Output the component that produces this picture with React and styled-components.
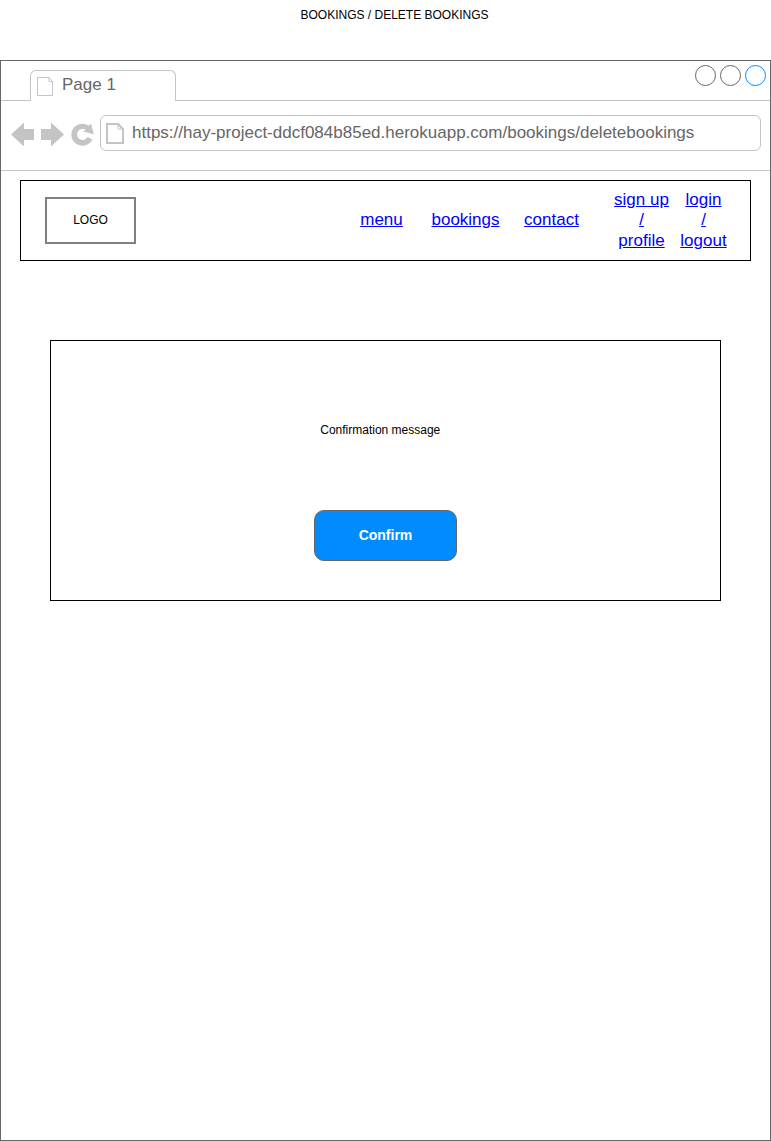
import React from "react";
import styled, { createGlobalStyle } from "styled-components";

const GlobalStyle = createGlobalStyle`
  * { box-sizing: border-box; }
  html, body { margin: 0; background: #fff; }
  body { font-family: "Liberation Sans", Arial, Helvetica, sans-serif; font-size: 12px; color: #000; overflow: hidden; }
`;

const Page = styled.div`
  width: 771px;
  height: 1141px;
  display: flex;
  flex-direction: column;
`;

const Title = styled.h1`
  margin: 0;
  height: 60px;
  padding: 8px 0 0 300.5px;
  font-size: 12px;
  font-weight: 400;
  line-height: 14px;
  white-space: nowrap;
`;

const BrowserWindow = styled.section`
  flex: 1;
  border: 1px solid #666;
  display: flex;
  flex-direction: column;
`;

const TabStrip = styled.div`
  height: 40px;
  display: flex;
  align-items: flex-end;
`;

const StripLead = styled.div`
  width: 29px;
  height: 40px;
  border-bottom: 1px solid #c4c4c4;
`;

const Tab = styled.div`
  width: 146px;
  height: 31px;
  border: 1px solid #c4c4c4;
  border-bottom: 0;
  border-radius: 6px 6px 0 0;
  display: flex;
  align-items: flex-start;
  padding: 6px 0 0 6px;
  gap: 8px;
  color: #666;
  font-size: 17px;
  line-height: 16px;
`;

const WindowControls = styled.div`
  flex: 1;
  height: 40px;
  border-bottom: 1px solid #c4c4c4;
  display: flex;
  justify-content: flex-end;
  gap: 4px;
  padding: 4px 4px 0 0;
`;

const ControlDot = styled.span`
  width: 21px;
  height: 21px;
  border: 1px solid ${(p) => p.$color};
  border-radius: 50%;
`;

const Toolbar = styled.div`
  height: 70px;
  border-bottom: 1px solid #c4c4c4;
  display: flex;
  align-items: flex-start;
  padding: 14px 9px 0 9px;
`;

const ToolIcons = styled.svg`
  width: 90px;
  height: 36px;
  flex: none;
  display: block;
`;

const AddressBar = styled.div`
  flex: 1;
  height: 36px;
  border: 1px solid #c4c4c4;
  border-radius: 6px;
  display: flex;
  align-items: flex-start;
  padding: 7px 0 0 5px;
  gap: 8px;
  color: #666;
  font-size: 17px;
  line-height: 20px;
`;

const DocIcon = styled.svg`
  flex: none;
  display: block;
`;

const NavBar = styled.nav`
  margin: 9px 19px 0;
  height: 81px;
  border: 1px solid #000;
  display: flex;
  align-items: center;
  padding: 0 16.5px 0 24px;
`;

const Logo = styled.div`
  width: 91px;
  height: 47px;
  border: 2px solid #808080;
  display: flex;
  align-items: center;
  justify-content: center;
  margin: 0 auto 1px 0;
`;

const NavLink = styled.a`
  width: ${(p) => p.$width}px;
  margin-left: ${(p) => p.$gap || 0}px;
  color: #0000ff;
  font-size: 17px;
  line-height: 20.4px;
  text-align: center;
  text-decoration: underline;
`;

const Dialog = styled.section`
  margin: 79px 49px 0;
  height: 261px;
  border: 1px solid #000;
  display: flex;
  flex-direction: column;
  align-items: center;
`;

const Message = styled.p`
  margin: 82px 10.5px 0 0;
  line-height: 14px;
`;

const ConfirmButton = styled.button`
  margin: 73px 0 0;
  width: 143px;
  height: 51px;
  border: 1px solid #666;
  border-radius: 10px;
  background: #008cff;
  color: #fff;
  font: bold 14px "Liberation Sans", Arial, sans-serif;
  padding: 0 0 2px;
`;

export default function App() {
  return (
    <Page>
      <GlobalStyle />
      <Title>BOOKINGS / DELETE BOOKINGS</Title>
      <BrowserWindow>
        <TabStrip>
          <StripLead />
          <Tab>
            <DocIcon width="17" height="20" viewBox="0 0 17 20" fill="none" stroke="#c4c4c4">
              <path d="M.5 .5H12L15.500 4.500V18.500H.5ZM12 .5V4.500H15.500" />
            </DocIcon>
            Page 1
          </Tab>
          <WindowControls>
            <ControlDot $color="#666" />
            <ControlDot $color="#666" />
            <ControlDot $color="#008cff" />
          </WindowControls>
        </TabStrip>
        <Toolbar>
          <ToolIcons viewBox="10 115 90 36" fill="#c4c4c4">
            <path d="M11 134.500L24 122.500V129H34V140H24V146.500Z" />
            <path d="M64 134.500L51 122.500V129H41V140H51V146.500Z" />
            <path d="M91 123.500L93.800 134.300L83 131.500L85.800 130A5.500 5.500 0 1 0 87.500 137L92.300 139.500A11 11 0 1 1 88.800 125.800Z" />
          </ToolIcons>
          <AddressBar>
            <DocIcon width="18" height="21" viewBox="0 0 18 21" fill="none" stroke="#c4c4c4" strokeWidth="2">
              <path d="M1 1H12L17 6V20H1Z" />
              <path d="M12 1V6H17" strokeWidth="1" />
            </DocIcon>
            https://hay-project-ddcf084b85ed.herokuapp.com/bookings/deletebookings
          </AddressBar>
        </Toolbar>
        <NavBar>
          <Logo>LOGO</Logo>
          <NavLink href="#" $width={50}>menu</NavLink>
          <NavLink href="#" $width={70} $gap={24}>bookings</NavLink>
          <NavLink href="#" $width={60} $gap={21}>contact</NavLink>
          <NavLink href="#" $width={60} $gap={30}>sign up<br />/<br />profile</NavLink>
          <NavLink href="#" $width={60} $gap={2}>login<br />/<br />logout</NavLink>
        </NavBar>
        <Dialog>
          <Message>Confirmation message</Message>
          <ConfirmButton>Confirm</ConfirmButton>
        </Dialog>
      </BrowserWindow>
    </Page>
  );
}
